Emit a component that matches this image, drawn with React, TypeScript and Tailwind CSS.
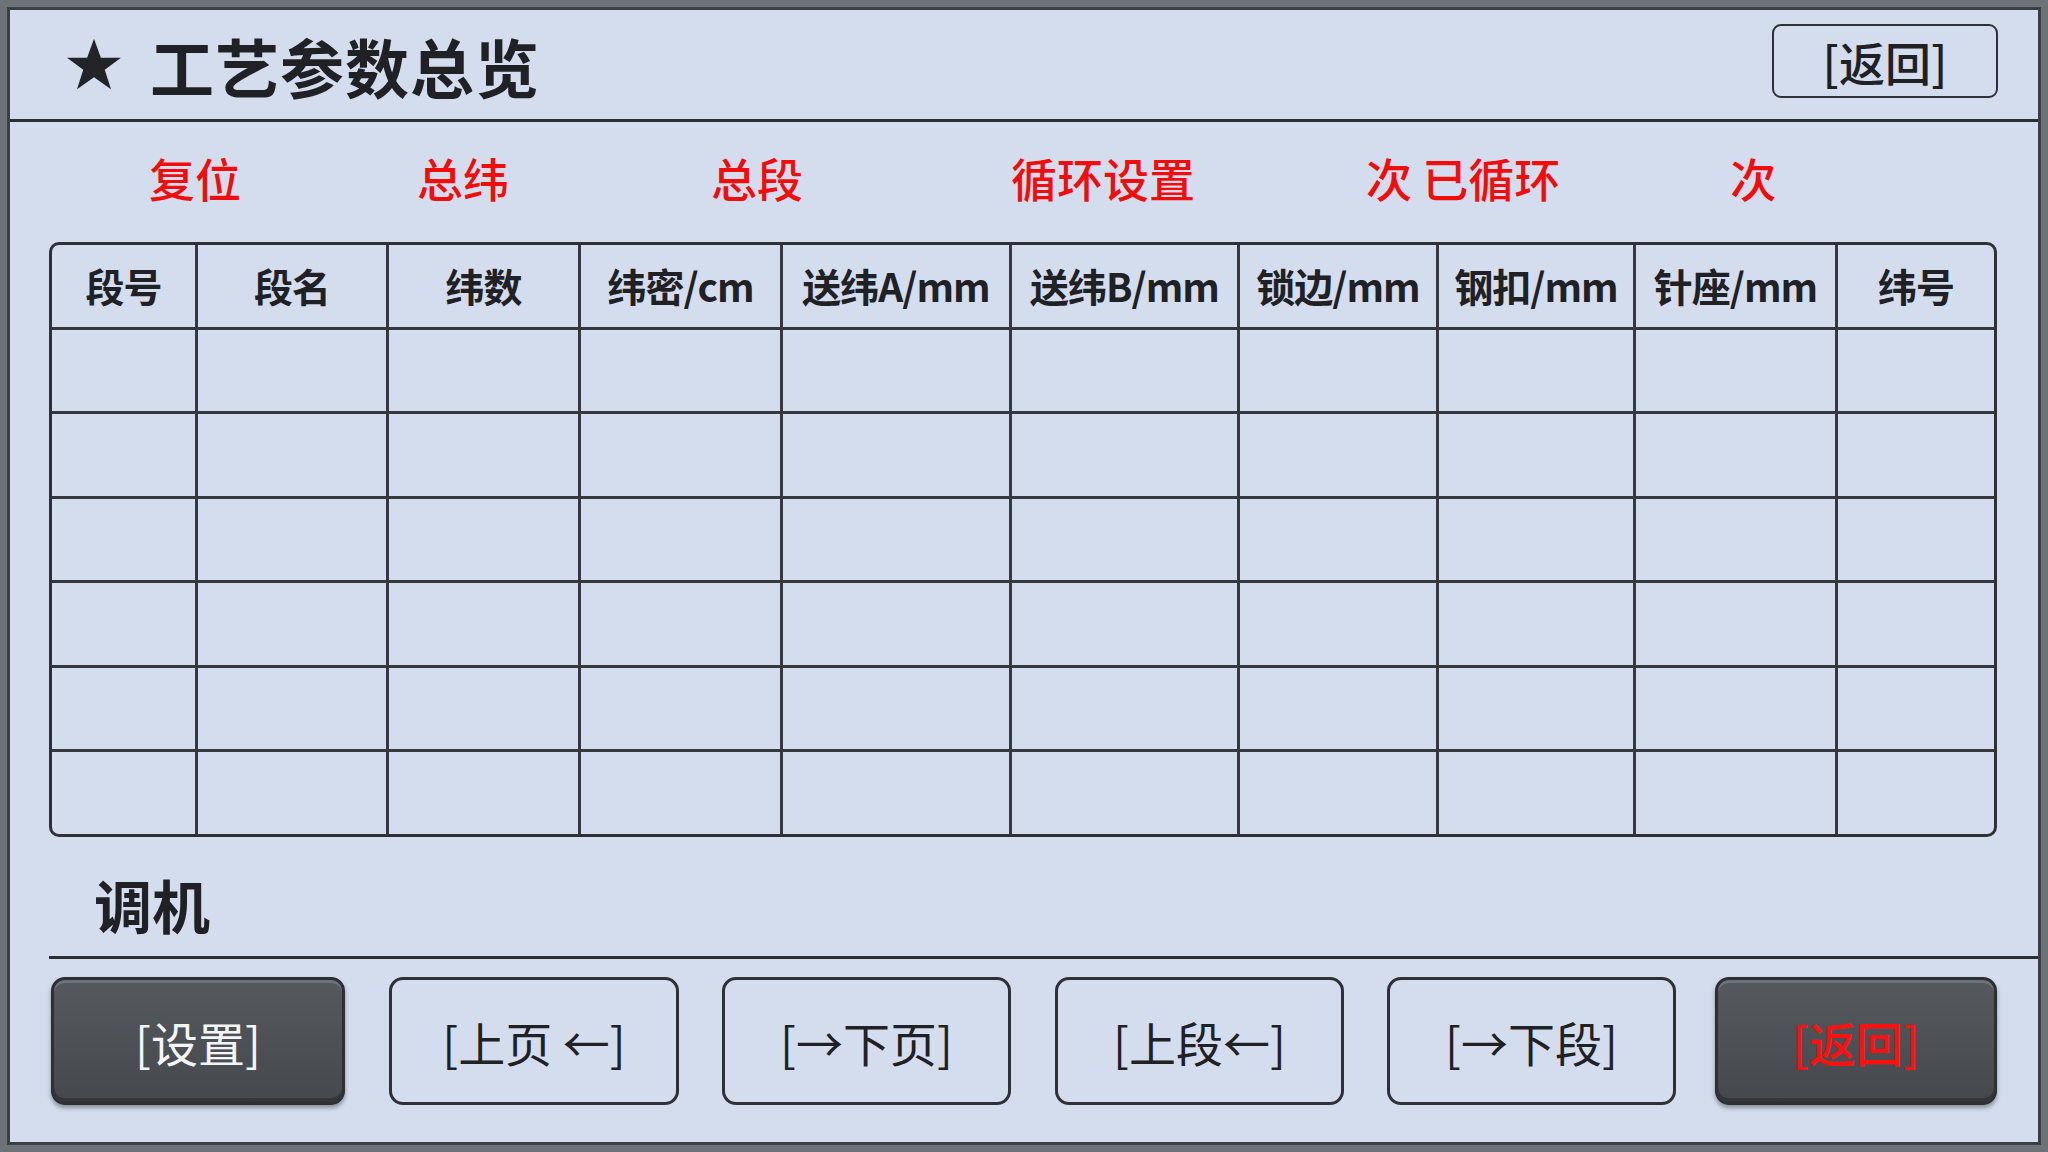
import React from "react";

const cols = [
  { label: "段号", w: 146 },
  { label: "段名", w: 191 },
  { label: "纬数", w: 192 },
  { label: "纬密/cm", w: 202 },
  { label: "送纬A/mm", w: 229 },
  { label: "送纬B/mm", w: 228 },
  { label: "锁边/mm", w: 199 },
  { label: "钢扣/mm", w: 197 },
  { label: "针座/mm", w: 202 },
  { label: "纬号", w: 162 },
];

const buttons = [
  { label: "[设置]", dark: true, red: false, w: "w-[294px]", ml: "ml-0" },
  { label: "[上页 ←]", dark: false, red: false, w: "w-[290px]", ml: "ml-[44px]" },
  { label: "[→下页]", dark: false, red: false, w: "w-[289px]", ml: "ml-[43px]" },
  { label: "[上段←]", dark: false, red: false, w: "w-[289px]", ml: "ml-[44px]" },
  { label: "[→下段]", dark: false, red: false, w: "w-[289px]", ml: "ml-[43px]" },
  { label: "[返回]", dark: true, red: true, w: "w-[282px]", ml: "ml-[39px]" },
];

function Star() {
  return (
    <svg width="60" height="60" viewBox="0 0 24 24" className="shrink-0">
      <path
        d="M12 1.5l2.75 7.6h8.05l-6.5 4.8 2.5 7.8L12 16.9l-6.8 4.8 2.5-7.8-6.5-4.8h8.05z"
        fill="#222427"
      />
    </svg>
  );
}

export default function App() {
  return (
    <div className="w-[2048px] h-[1152px] bg-[#6d7178] p-[7px] font-['Noto_Sans_CJK_SC','Noto_Sans',sans-serif]">
      <div className="w-full h-full border-[3px] border-[#3b3e43] bg-[#d3ddee] flex flex-col">
        {/* Header */}
        <div className="h-[112px] shrink-0 border-b-[3px] border-[#2c2e32] flex items-center pl-[54px] pr-[40px]">
          <Star />
          <div className="ml-[26px] text-[64px] font-bold text-[#1f2124] leading-none tracking-[1px]">
            工艺参数总览
          </div>
          <div className="ml-auto mt-[-8px] w-[226px] h-[74px] border-2 border-[#2f3135] rounded-[9px] flex items-center justify-center text-[46px] text-[#1f2124] font-medium leading-none">
            [返回]
          </div>
        </div>

        {/* Red labels */}
        <div className="h-[120px] shrink-0 flex items-center pb-[10px] text-[46px] font-medium text-[#f20d0d] leading-none">
          <span className="ml-[139px]">复位</span>
          <span className="ml-[176px]">总纬</span>
          <span className="ml-[202px]">总段</span>
          <span className="ml-[208px]">循环设置</span>
          <span className="ml-[171px] whitespace-pre">次 已循环</span>
          <span className="ml-[170px]">次</span>
        </div>

        {/* Table */}
        <div className="ml-[39px] w-[1948px] h-[595px] shrink-0 border-[3px] border-[#2f3135] rounded-[10px] overflow-hidden flex flex-col">
          {Array.from({ length: 7 }).map((_, r) => (
            <div
              key={r}
              className={`flex flex-1 ${r < 6 ? "border-b-[3px] border-[#35383c]" : ""}`}
            >
              {cols.map((c, i) => (
                <div
                  key={i}
                  style={{ width: c.w }}
                  className={`shrink-0 flex items-center justify-center ${i < cols.length - 1 ? "border-r-[3px] border-[#35383c]" : "flex-1"}`}
                >
                  {r === 0 && (
                    <span className="text-[39px] font-bold text-[#1f2124] leading-none tracking-[-1px]">
                      {c.label}
                    </span>
                  )}
                </div>
              ))}
            </div>
          ))}
        </div>

        {/* 调机 */}
        <div className="h-[119px] shrink-0 flex items-center pl-[84px] pt-[14px]">
          <span className="text-[58px] font-bold text-[#1f2124] leading-none">调机</span>
        </div>
        <div className="ml-[39px] border-b-[3px] border-[#2c2e32]" />

        {/* Buttons */}
        <div className="flex-1 flex items-start pl-[41px] pt-[18px]">
          {buttons.map((b, i) => (
            <div
              key={i}
              className={`${b.w} ${b.ml} shrink-0 h-[128px] rounded-[14px] border-[3px] flex items-center justify-center ${
                b.dark
                  ? "border-[#2e3033] bg-gradient-to-b from-[#55585d] to-[#45484c] shadow-[inset_0_3px_0_rgba(255,255,255,0.16),inset_0_-4px_0_rgba(0,0,0,0.25),0_3px_4px_rgba(0,0,0,0.35)]"
                  : "border-[#2f3135]"
              }`}
            >
              <span
                className={`text-[47px] leading-none ${b.dark ? (b.red ? "text-[#ff1010] font-medium" : "text-[#f4f5f7]") : "text-[#1f2124]"}`}
              >
                {b.label}
              </span>
            </div>
          ))}
        </div>
      </div>
    </div>
  );
}
